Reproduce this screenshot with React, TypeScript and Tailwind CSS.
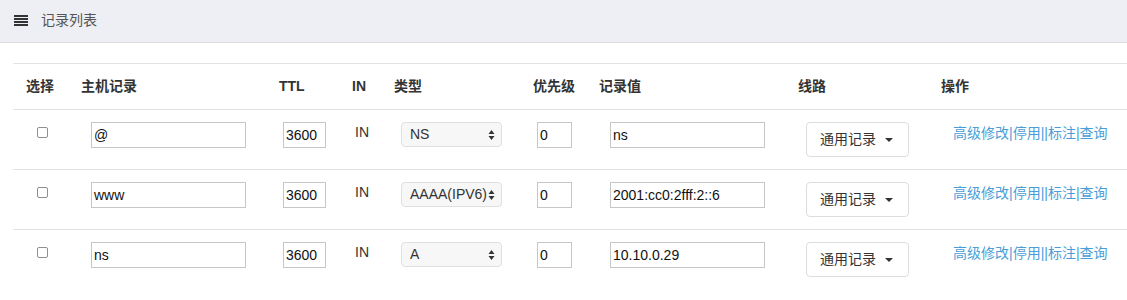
import React from "react";

const cols = "grid grid-cols-[60px_198px_73px_42px_139px_66px_199px_143px_1fr]";

const rows = [
  { host: "@", type: "NS", value: "ns" },
  { host: "www", type: "AAAA(IPV6)", value: "2001:cc0:2fff:2::6" },
  { host: "ns", type: "A", value: "10.10.0.29" },
];

function Stepper() {
  return (
    <svg width="7" height="12" viewBox="0 0 7 12" className="shrink-0">
      <path d="M3.5 1 L6.5 5 L0.5 5 Z" fill="#333" />
      <path d="M3.5 11 L6.5 7 L0.5 7 Z" fill="#333" />
    </svg>
  );
}

function Field({ value, w }: { value: string; w: string }) {
  return (
    <div className={`${w} h-[26px] border border-[#c6c6c6] bg-white flex items-center pl-[2px] text-[14px] text-[#111] overflow-hidden whitespace-nowrap`}>
      {value}
    </div>
  );
}

export default function App() {
  return (
    <div
      className="w-[1127px] h-[300px] bg-white overflow-hidden"
      style={{ fontFamily: '"Liberation Sans", "Noto Sans CJK SC", sans-serif' }}
    >
      <div className="h-[43px] bg-[#eeeff4] border-b border-[#dcdcdf] flex items-center pl-[14px] pb-[2px]">
        <svg width="14" height="11" viewBox="0 0 14 11" className="mr-[13px]">
          <rect x="0" y="0" width="14" height="2" fill="#333" />
          <rect x="0" y="3" width="14" height="2" fill="#333" />
          <rect x="0" y="6" width="14" height="2" fill="#333" />
          <rect x="0" y="9" width="14" height="2" fill="#333" />
        </svg>
        <span className="text-[14px] text-[#555]">记录列表</span>
      </div>

      <div className="ml-[13px] mt-[20px]">
        <div className={`${cols} h-[47px] border-t border-b border-[#e2e2e2] items-center text-[14px] font-bold text-[#333]`}>
          <div className="pl-[13px]">选择</div>
          <div className="pl-[8px]">主机记录</div>
          <div className="pl-[8px]">TTL</div>
          <div className="pl-[8px]">IN</div>
          <div className="pl-[8px]">类型</div>
          <div className="pl-[8px]">优先级</div>
          <div className="pl-[8px]">记录值</div>
          <div className="pl-[8px]">线路</div>
          <div className="pl-[8px]">操作</div>
        </div>

        {rows.map((r, i) => (
          <div
            key={i}
            className={`${cols} h-[60px] ${i < rows.length - 1 ? "border-b border-[#e2e2e2]" : ""}`}
          >
            <div className="pl-[24px] pt-[17px]">
              <div className="w-[11px] h-[11px] border border-[#8f8f8f] rounded-[2px] bg-white" />
            </div>
            <div className="pl-[18px] pt-[12px]">
              <Field value={r.host} w="w-[155px]" />
            </div>
            <div className="pl-[12px] pt-[12px]">
              <Field value="3600" w="w-[43px]" />
            </div>
            <div className="pl-[11px] pt-[13px] text-[14px] text-[#333] leading-[18px]">IN</div>
            <div className="pl-[15px] pt-[12px]">
              <div className="w-[101px] h-[25px] rounded-[4px] border border-[#e0e0e0] bg-[#f7f7f7] flex items-center justify-between pl-[8px] pr-[6px] text-[14px] text-[#333] whitespace-nowrap">
                <span>{r.type}</span>
                <Stepper />
              </div>
            </div>
            <div className="pl-[12px] pt-[12px]">
              <Field value="0" w="w-[35px]" />
            </div>
            <div className="pl-[19px] pt-[12px]">
              <Field value={r.value} w="w-[155px]" />
            </div>
            <div className="pl-[16px] pt-[12px]">
              <div className="w-[103px] h-[35px] rounded-[4px] border border-[#dddddd] bg-white flex items-center pl-[13px] text-[14px] text-[#333]">
                <span>通用记录</span>
                <svg width="8" height="4" viewBox="0 0 8 4" className="ml-[9px]">
                  <path d="M0 0 L8 0 L4 4 Z" fill="#333" />
                </svg>
              </div>
            </div>
            <div className="pl-[20px] pt-[13px] text-[14px] leading-[20px] text-[#4a9dd6] whitespace-nowrap">
              <span>高级修改</span>|<span>停用</span>||<span>标注</span>|<span>查询</span>
            </div>
          </div>
        ))}
      </div>
    </div>
  );
}
